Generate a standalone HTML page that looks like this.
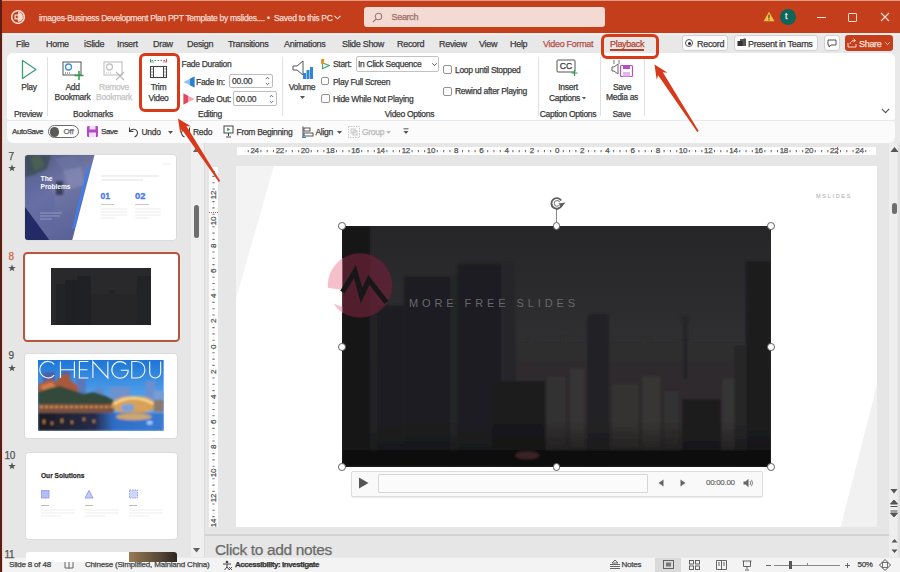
<!DOCTYPE html>
<html><head><meta charset="utf-8">
<style>
*{margin:0;padding:0;box-sizing:border-box}
html,body{width:900px;height:572px;overflow:hidden;background:#e9e9e9}
body{font-family:"Liberation Sans",sans-serif;position:relative}
.a{position:absolute}
.t{position:absolute;white-space:nowrap;line-height:1;-webkit-text-stroke:0.25px currentColor}
</style></head><body>
<div id="root" class="a" style="left:0;top:0;width:900px;height:572px;overflow:hidden;background:#e9e9e9">

<!-- title bar -->
<div class="a" style="left:0;top:0;width:900px;height:33px;background:#c43e1c"></div>
<div class="a" style="left:0;top:0;width:900px;height:1px;background:#e39b86"></div>

<!-- tab row -->
<div class="a" style="left:0;top:33px;width:900px;height:20px;background:#e8e8e9"></div><div class="a" style="left:0;top:33px;width:900px;height:1.5px;background:#f3eeec"></div>

<!-- ribbon panel -->
<div class="a" style="left:7px;top:53px;width:888px;height:66.5px;background:#fff;border-radius:6px 6px 2px 2px"></div>
<!-- QAT -->
<div class="a" style="left:7px;top:120.5px;width:888px;height:22.5px;background:#fbfbfb;border-radius:2px 2px 6px 6px"></div>

<!-- left pane -->
<div class="a" style="left:2px;top:143px;width:202px;height:414px;background:#e6e6e6"></div>
<!-- edit area -->
<div class="a" style="left:204px;top:143px;width:685px;height:414px;background:#e6e6e6;border-left:1px solid #d4d4d4"></div>
<!-- notes separator -->
<div class="a" style="left:205px;top:534px;width:684px;height:2px;background:#d2d2d2"></div>
<!-- right scrollbar -->
<div class="a" style="left:889px;top:143px;width:8px;height:414px;background:#eeeeee"></div>
<div class="a" style="left:898px;top:143px;width:2px;height:414px;background:#e0e0e0"></div>
<!-- status bar -->
<div class="a" style="left:0;top:557.5px;width:900px;height:14.5px;background:#f3f3f3"></div>




<!-- ===== RULERS ===== -->
<div class="a" style="left:237px;top:146.8px;width:639px;height:8.4px;background:#fff"></div>
<div class="a" style="left:208.7px;top:167px;width:9.5px;height:360px;background:#fff"></div>
<div class="t" style="left:254.6px;top:147.3px;font-size:8px;letter-spacing:-0.3px;color:#505050;transform:translateX(-50%)">24</div>
<div class="t" style="left:279.8px;top:147.3px;font-size:8px;letter-spacing:-0.3px;color:#505050;transform:translateX(-50%)">22</div>
<div class="t" style="left:305.0px;top:147.3px;font-size:8px;letter-spacing:-0.3px;color:#505050;transform:translateX(-50%)">20</div>
<div class="t" style="left:330.2px;top:147.3px;font-size:8px;letter-spacing:-0.3px;color:#505050;transform:translateX(-50%)">18</div>
<div class="t" style="left:355.4px;top:147.3px;font-size:8px;letter-spacing:-0.3px;color:#505050;transform:translateX(-50%)">16</div>
<div class="t" style="left:380.6px;top:147.3px;font-size:8px;letter-spacing:-0.3px;color:#505050;transform:translateX(-50%)">14</div>
<div class="t" style="left:405.8px;top:147.3px;font-size:8px;letter-spacing:-0.3px;color:#505050;transform:translateX(-50%)">12</div>
<div class="t" style="left:431.0px;top:147.3px;font-size:8px;letter-spacing:-0.3px;color:#505050;transform:translateX(-50%)">10</div>
<div class="t" style="left:456.2px;top:147.3px;font-size:8px;letter-spacing:-0.3px;color:#505050;transform:translateX(-50%)">8</div>
<div class="t" style="left:481.4px;top:147.3px;font-size:8px;letter-spacing:-0.3px;color:#505050;transform:translateX(-50%)">6</div>
<div class="t" style="left:506.6px;top:147.3px;font-size:8px;letter-spacing:-0.3px;color:#505050;transform:translateX(-50%)">4</div>
<div class="t" style="left:531.8px;top:147.3px;font-size:8px;letter-spacing:-0.3px;color:#505050;transform:translateX(-50%)">2</div>
<div class="t" style="left:557.0px;top:147.3px;font-size:8px;letter-spacing:-0.3px;color:#505050;transform:translateX(-50%)">0</div>
<div class="t" style="left:582.2px;top:147.3px;font-size:8px;letter-spacing:-0.3px;color:#505050;transform:translateX(-50%)">2</div>
<div class="t" style="left:607.4px;top:147.3px;font-size:8px;letter-spacing:-0.3px;color:#505050;transform:translateX(-50%)">4</div>
<div class="t" style="left:632.6px;top:147.3px;font-size:8px;letter-spacing:-0.3px;color:#505050;transform:translateX(-50%)">6</div>
<div class="t" style="left:657.8px;top:147.3px;font-size:8px;letter-spacing:-0.3px;color:#505050;transform:translateX(-50%)">8</div>
<div class="t" style="left:683.0px;top:147.3px;font-size:8px;letter-spacing:-0.3px;color:#505050;transform:translateX(-50%)">10</div>
<div class="t" style="left:708.2px;top:147.3px;font-size:8px;letter-spacing:-0.3px;color:#505050;transform:translateX(-50%)">12</div>
<div class="t" style="left:733.4px;top:147.3px;font-size:8px;letter-spacing:-0.3px;color:#505050;transform:translateX(-50%)">14</div>
<div class="t" style="left:758.6px;top:147.3px;font-size:8px;letter-spacing:-0.3px;color:#505050;transform:translateX(-50%)">16</div>
<div class="t" style="left:783.8px;top:147.3px;font-size:8px;letter-spacing:-0.3px;color:#505050;transform:translateX(-50%)">18</div>
<div class="t" style="left:809.0px;top:147.3px;font-size:8px;letter-spacing:-0.3px;color:#505050;transform:translateX(-50%)">20</div>
<div class="t" style="left:834.2px;top:147.3px;font-size:8px;letter-spacing:-0.3px;color:#505050;transform:translateX(-50%)">22</div>
<div class="t" style="left:859.4px;top:147.3px;font-size:8px;letter-spacing:-0.3px;color:#505050;transform:translateX(-50%)">24</div>
<svg class="a" style="left:0;top:0" width="900" height="572"><path d="M248.3 150 v2.2 M260.9 150 v2.2 M267.2 150 v2.2 M273.5 150 v2.2 M286.1 150 v2.2 M292.4 150 v2.2 M298.7 150 v2.2 M311.3 150 v2.2 M317.6 150 v2.2 M323.9 150 v2.2 M336.5 150 v2.2 M342.8 150 v2.2 M349.1 150 v2.2 M361.7 150 v2.2 M368.0 150 v2.2 M374.3 150 v2.2 M386.9 150 v2.2 M393.2 150 v2.2 M399.5 150 v2.2 M412.1 150 v2.2 M418.4 150 v2.2 M424.7 150 v2.2 M437.3 150 v2.2 M443.6 150 v2.2 M449.9 150 v2.2 M462.5 150 v2.2 M468.8 150 v2.2 M475.1 150 v2.2 M487.7 150 v2.2 M494.0 150 v2.2 M500.3 150 v2.2 M512.9 150 v2.2 M519.2 150 v2.2 M525.5 150 v2.2 M538.1 150 v2.2 M544.4 150 v2.2 M550.7 150 v2.2 M563.3 150 v2.2 M569.6 150 v2.2 M575.9 150 v2.2 M588.5 150 v2.2 M594.8 150 v2.2 M601.1 150 v2.2 M613.7 150 v2.2 M620.0 150 v2.2 M626.3 150 v2.2 M638.9 150 v2.2 M645.2 150 v2.2 M651.5 150 v2.2 M664.1 150 v2.2 M670.4 150 v2.2 M676.7 150 v2.2 M689.3 150 v2.2 M695.6 150 v2.2 M701.9 150 v2.2 M714.5 150 v2.2 M720.8 150 v2.2 M727.1 150 v2.2 M739.7 150 v2.2 M746.0 150 v2.2 M752.3 150 v2.2 M764.9 150 v2.2 M771.2 150 v2.2 M777.5 150 v2.2 M790.1 150 v2.2 M796.4 150 v2.2 M802.7 150 v2.2 M815.3 150 v2.2 M821.6 150 v2.2 M827.9 150 v2.2 M840.5 150 v2.2 M846.8 150 v2.2 M853.1 150 v2.2 M865.7 150 v2.2" stroke="#707070" stroke-width="1.1"/><path d="M245.2 150.6 v1 M251.4 150.6 v1 M257.8 150.6 v1 M264.1 150.6 v1 M270.4 150.6 v1 M276.7 150.6 v1 M282.9 150.6 v1 M289.2 150.6 v1 M295.6 150.6 v1 M301.9 150.6 v1 M308.1 150.6 v1 M314.5 150.6 v1 M320.8 150.6 v1 M327.1 150.6 v1 M333.4 150.6 v1 M339.6 150.6 v1 M346.0 150.6 v1 M352.2 150.6 v1 M358.6 150.6 v1 M364.9 150.6 v1 M371.1 150.6 v1 M377.5 150.6 v1 M383.8 150.6 v1 M390.1 150.6 v1 M396.4 150.6 v1 M402.6 150.6 v1 M409.0 150.6 v1 M415.2 150.6 v1 M421.6 150.6 v1 M427.9 150.6 v1 M434.1 150.6 v1 M440.4 150.6 v1 M446.8 150.6 v1 M453.1 150.6 v1 M459.4 150.6 v1 M465.6 150.6 v1 M471.9 150.6 v1 M478.2 150.6 v1 M484.6 150.6 v1 M490.9 150.6 v1 M497.1 150.6 v1 M503.4 150.6 v1 M509.8 150.6 v1 M516.0 150.6 v1 M522.4 150.6 v1 M528.6 150.6 v1 M535.0 150.6 v1 M541.2 150.6 v1 M547.5 150.6 v1 M553.9 150.6 v1 M560.1 150.6 v1 M566.5 150.6 v1 M572.8 150.6 v1 M579.0 150.6 v1 M585.4 150.6 v1 M591.6 150.6 v1 M598.0 150.6 v1 M604.2 150.6 v1 M610.5 150.6 v1 M616.9 150.6 v1 M623.1 150.6 v1 M629.5 150.6 v1 M635.8 150.6 v1 M642.0 150.6 v1 M648.4 150.6 v1 M654.6 150.6 v1 M661.0 150.6 v1 M667.2 150.6 v1 M673.5 150.6 v1 M679.9 150.6 v1 M686.1 150.6 v1 M692.5 150.6 v1 M698.8 150.6 v1 M705.0 150.6 v1 M711.4 150.6 v1 M717.6 150.6 v1 M724.0 150.6 v1 M730.2 150.6 v1 M736.5 150.6 v1 M742.9 150.6 v1 M749.1 150.6 v1 M755.5 150.6 v1 M761.8 150.6 v1 M768.0 150.6 v1 M774.4 150.6 v1 M780.6 150.6 v1 M787.0 150.6 v1 M793.2 150.6 v1 M799.5 150.6 v1 M805.9 150.6 v1 M812.1 150.6 v1 M818.5 150.6 v1 M824.8 150.6 v1 M831.0 150.6 v1 M837.3 150.6 v1 M843.6 150.6 v1 M850.0 150.6 v1 M856.2 150.6 v1 M862.5 150.6 v1 M868.8 150.6 v1" stroke="#cfcfcf" stroke-width="0.8"/></svg>
<div class="a" style="left:212.4px;top:170.5px;width:2.2px;height:1.1px;background:#707070"></div>
<div class="t" style="left:213.5px;top:195.3px;font-size:8px;letter-spacing:-0.3px;color:#505050;transform:translate(-50%,-50%) rotate(-90deg)">12</div>
<div class="t" style="left:213.5px;top:220.5px;font-size:8px;letter-spacing:-0.3px;color:#505050;transform:translate(-50%,-50%) rotate(-90deg)">10</div>
<div class="t" style="left:213.5px;top:245.7px;font-size:8px;letter-spacing:-0.3px;color:#505050;transform:translate(-50%,-50%) rotate(-90deg)">8</div>
<div class="t" style="left:213.5px;top:270.9px;font-size:8px;letter-spacing:-0.3px;color:#505050;transform:translate(-50%,-50%) rotate(-90deg)">6</div>
<div class="t" style="left:213.5px;top:296.1px;font-size:8px;letter-spacing:-0.3px;color:#505050;transform:translate(-50%,-50%) rotate(-90deg)">4</div>
<div class="t" style="left:213.5px;top:321.3px;font-size:8px;letter-spacing:-0.3px;color:#505050;transform:translate(-50%,-50%) rotate(-90deg)">2</div>
<div class="t" style="left:213.5px;top:346.5px;font-size:8px;letter-spacing:-0.3px;color:#505050;transform:translate(-50%,-50%) rotate(-90deg)">0</div>
<div class="t" style="left:213.5px;top:371.7px;font-size:8px;letter-spacing:-0.3px;color:#505050;transform:translate(-50%,-50%) rotate(-90deg)">2</div>
<div class="t" style="left:213.5px;top:396.9px;font-size:8px;letter-spacing:-0.3px;color:#505050;transform:translate(-50%,-50%) rotate(-90deg)">4</div>
<div class="t" style="left:213.5px;top:422.1px;font-size:8px;letter-spacing:-0.3px;color:#505050;transform:translate(-50%,-50%) rotate(-90deg)">6</div>
<div class="t" style="left:213.5px;top:447.3px;font-size:8px;letter-spacing:-0.3px;color:#505050;transform:translate(-50%,-50%) rotate(-90deg)">8</div>
<div class="t" style="left:213.5px;top:472.5px;font-size:8px;letter-spacing:-0.3px;color:#505050;transform:translate(-50%,-50%) rotate(-90deg)">10</div>
<div class="t" style="left:213.5px;top:497.7px;font-size:8px;letter-spacing:-0.3px;color:#505050;transform:translate(-50%,-50%) rotate(-90deg)">12</div>
<div class="t" style="left:213.5px;top:522.9px;font-size:8px;letter-spacing:-0.3px;color:#505050;transform:translate(-50%,-50%) rotate(-90deg)">14</div>
<svg class="a" style="left:0;top:0" width="900" height="572"><path d="M212.4 176.4 h2.2 M212.4 182.7 h2.2 M212.4 189.0 h2.2 M212.4 201.6 h2.2 M212.4 207.9 h2.2 M212.4 214.2 h2.2 M212.4 226.8 h2.2 M212.4 233.1 h2.2 M212.4 239.4 h2.2 M212.4 252.0 h2.2 M212.4 258.3 h2.2 M212.4 264.6 h2.2 M212.4 277.2 h2.2 M212.4 283.5 h2.2 M212.4 289.8 h2.2 M212.4 302.4 h2.2 M212.4 308.7 h2.2 M212.4 315.0 h2.2 M212.4 327.6 h2.2 M212.4 333.9 h2.2 M212.4 340.2 h2.2 M212.4 352.8 h2.2 M212.4 359.1 h2.2 M212.4 365.4 h2.2 M212.4 378.0 h2.2 M212.4 384.3 h2.2 M212.4 390.6 h2.2 M212.4 403.2 h2.2 M212.4 409.5 h2.2 M212.4 415.8 h2.2 M212.4 428.4 h2.2 M212.4 434.7 h2.2 M212.4 441.0 h2.2 M212.4 453.6 h2.2 M212.4 459.9 h2.2 M212.4 466.2 h2.2 M212.4 478.8 h2.2 M212.4 485.1 h2.2 M212.4 491.4 h2.2 M212.4 504.0 h2.2 M212.4 510.3 h2.2 M212.4 516.6 h2.2" stroke="#707070" stroke-width="1.1"/><path d="M213 173.2 h1 M213 179.6 h1 M213 185.8 h1 M213 192.2 h1 M213 198.5 h1 M213 204.8 h1 M213 211.1 h1 M213 217.3 h1 M213 223.7 h1 M213 229.9 h1 M213 236.2 h1 M213 242.6 h1 M213 248.9 h1 M213 255.2 h1 M213 261.4 h1 M213 267.8 h1 M213 274.1 h1 M213 280.4 h1 M213 286.6 h1 M213 292.9 h1 M213 299.2 h1 M213 305.6 h1 M213 311.9 h1 M213 318.1 h1 M213 324.4 h1 M213 330.8 h1 M213 337.1 h1 M213 343.4 h1 M213 349.6 h1 M213 355.9 h1 M213 362.2 h1 M213 368.6 h1 M213 374.9 h1 M213 381.1 h1 M213 387.4 h1 M213 393.8 h1 M213 400.1 h1 M213 406.4 h1 M213 412.6 h1 M213 418.9 h1 M213 425.2 h1 M213 431.6 h1 M213 437.9 h1 M213 444.1 h1 M213 450.4 h1 M213 456.8 h1 M213 463.1 h1 M213 469.4 h1 M213 475.6 h1 M213 481.9 h1 M213 488.2 h1 M213 494.5 h1 M213 500.9 h1 M213 507.1 h1 M213 513.5 h1 M213 519.8 h1" stroke="#cfcfcf" stroke-width="0.8"/></svg>
<div class="a" style="left:836.5px;top:147px;width:1px;height:8px;background:repeating-linear-gradient(#e05050 0 1px,transparent 1px 2px)"></div>
<div class="a" style="left:209px;top:212px;width:9px;height:1px;background:repeating-linear-gradient(90deg,#e05050 0 1px,transparent 1px 2px)"></div>
<!-- ===== SLIDE ===== -->
<div class="a" style="left:236px;top:166px;width:641px;height:361px;background:#fff;overflow:hidden">
 <svg class="a" style="left:0;top:0" width="641" height="361" viewBox="0 0 641 361">
  <polygon points="0,0 38,0 0,132.6" fill="#f3f3f3"/>
  <polygon points="604.6,361 641,219 641,361" fill="#f1f1f1"/>
 </svg>
 <div class="t" style="left:580px;top:28px;font-size:5.5px;letter-spacing:1.7px;color:#a8a8a8;-webkit-text-stroke:0">MSLIDES</div>
</div>

<!-- video -->
<div class="a" style="left:342.2px;top:226.3px;width:428.5px;height:240.5px;background:#2b2b2d;overflow:hidden">
 <svg class="a" style="left:0;top:0" width="428.5" height="240.5" viewBox="0 0 428 240">
  <defs>
   <linearGradient id="vsky" x1="0" y1="0" x2="0" y2="1"><stop offset="0" stop-color="#262628"/><stop offset="0.47" stop-color="#2f2f31"/><stop offset="1" stop-color="#262526"/></linearGradient>
   <linearGradient id="vbot" x1="0" y1="0" x2="0" y2="1"><stop offset="0" stop-color="#141414" stop-opacity="0"/><stop offset="1" stop-color="#141414" stop-opacity="0.85"/></linearGradient>
   <filter id="vbl" x="-2%" y="-2%" width="104%" height="104%"><feGaussianBlur stdDeviation="1"/></filter>
  </defs>
  <rect x="0" y="0" width="428" height="240" fill="url(#vsky)"/>
  <g filter="url(#vbl)">
  <path d="M174 118 h12 v-5 h8 v5 h26 v-7 h6 v7 h30 v-4 h10 v4 h34 v-6 h8 v6 h30 v-3 h12 v3 h78 v122 H174 Z" fill="#2d2d2f"/>
  <rect x="174" y="135" width="254" height="105" fill="#2e2c2d"/>
  <rect x="205" y="150" width="18" height="80" fill="#333132"/>
  <rect x="228" y="142" width="14" height="88" fill="#363434"/>
  <rect x="270" y="158" width="26" height="72" fill="#353333"/>
  <rect x="300" y="150" width="18" height="80" fill="#373535"/>
  <rect x="322" y="165" width="14" height="60" fill="#333131"/>
  <rect x="380" y="152" width="20" height="78" fill="#363434"/>
  <rect x="0" y="0" width="28" height="240" fill="#141518"/>
  <rect x="28" y="60" width="7" height="180" fill="#222326"/>
  <rect x="35" y="79" width="27" height="161" fill="#1d1e21"/>
  <rect x="62" y="50" width="53" height="190" fill="#1c1d20"/>
  <rect x="108" y="50" width="7" height="190" fill="#242528"/>
  <rect x="115" y="37" width="44" height="203" fill="#1e1f22"/>
  <rect x="159" y="37" width="15" height="203" fill="#262629"/>
  <rect x="150" y="155" width="53" height="85" fill="#1a1a1c"/>
  <rect x="245" y="88" width="22" height="152" fill="#232325"/>
  <rect x="341.5" y="93" width="3" height="60" fill="#242426"/>
  <path d="M337 90 h11 l-3 5 h-5 Z" fill="#262628"/>
  <rect x="340" y="173" width="38" height="67" fill="#1d1d1f"/>
  <rect x="404" y="35" width="24" height="205" fill="#1b1c1e"/>
  <rect x="392" y="120" width="12" height="120" fill="#262628"/>
  <rect x="0" y="195" width="428" height="45" fill="url(#vbot)"/>
  <rect x="0" y="224" width="428" height="16" fill="#0b0b0c"/>
  <ellipse cx="185" cy="229" rx="12" ry="4" fill="#3a2226"/>
  </g>
 </svg>
</div>
<!-- watermark -->
<svg class="a" style="left:315px;top:245px" width="90" height="80" viewBox="0 0 90 80">
  <defs>
   <mask id="wm"><rect x="0" y="0" width="90" height="80" fill="#fff"/><polygon points="0,41 27.5,45 27.5,62 18,58.5 0,57" fill="#000"/></mask>
   <clipPath id="cwL"><rect x="0" y="0" width="27.5" height="80"/></clipPath>
   <clipPath id="cwR"><rect x="27.5" y="0" width="63" height="80"/></clipPath>
  </defs>
  <g mask="url(#wm)">
   <circle cx="45" cy="40.5" r="32.3" fill="#f5bfcc" clip-path="url(#cwL)"/>
  </g>
  <circle cx="45" cy="40.5" r="32.3" fill="#6a2036" opacity="0.72" clip-path="url(#cwR)"/>
  <path d="M27.5 47 L40 26.5 L46.5 50.5 L53.8 35 L71.5 57.5" fill="none" stroke="#17171a" stroke-width="5.2" stroke-linejoin="miter" stroke-miterlimit="3"/>
</svg>
<div class="t" style="left:409px;top:297.5px;font-size:11px;letter-spacing:3.9px;color:#68686c;-webkit-text-stroke:0">MORE FREE SLIDES</div>
<!-- selection frame -->
<div class="a" style="left:556.3px;top:209px;width:1px;height:17px;background:#8a8a8a"></div>
<svg class="a" style="left:548.8px;top:195.6px" width="18" height="16" viewBox="0 0 18 16"><path d="M12.6 9.5 A5.3 5.3 0 1 1 12.2 4.6" fill="none" stroke="#5e5e5e" stroke-width="1.9"/><path d="M10.3 9 A2.8 2.8 0 1 1 10.6 6.2" fill="none" stroke="#8a8a8a" stroke-width="1.1"/><path d="M9.6 7.6 L16.4 6.6 L12.4 11.6 Z" fill="#5e5e5e"/></svg>

<div class="a" style="left:338.3px;top:222.4px;width:7.8px;height:7.8px;border-radius:50%;background:#fff;border:1.3px solid #5e5e5e"></div>
<div class="a" style="left:552.6px;top:222.4px;width:7.8px;height:7.8px;border-radius:50%;background:#fff;border:1.3px solid #5e5e5e"></div>
<div class="a" style="left:766.8px;top:222.4px;width:7.8px;height:7.8px;border-radius:50%;background:#fff;border:1.3px solid #5e5e5e"></div>
<div class="a" style="left:338.3px;top:342.9px;width:7.8px;height:7.8px;border-radius:50%;background:#fff;border:1.3px solid #5e5e5e"></div>
<div class="a" style="left:766.8px;top:342.9px;width:7.8px;height:7.8px;border-radius:50%;background:#fff;border:1.3px solid #5e5e5e"></div>
<div class="a" style="left:338.3px;top:463.3px;width:7.8px;height:7.8px;border-radius:50%;background:#fff;border:1.3px solid #5e5e5e"></div>
<div class="a" style="left:552.6px;top:463.3px;width:7.8px;height:7.8px;border-radius:50%;background:#fff;border:1.3px solid #5e5e5e"></div>
<div class="a" style="left:766.8px;top:463.3px;width:7.8px;height:7.8px;border-radius:50%;background:#fff;border:1.3px solid #5e5e5e"></div>
<!-- video controls -->
<div class="a" style="left:350.5px;top:470.5px;width:412px;height:26px;background:#f9f9f9;border:1px solid #dcdcdc;border-radius:2px;box-shadow:0 1px 1px rgba(0,0,0,0.08)"></div>
<svg class="a" style="left:358px;top:477px" width="11" height="12" viewBox="0 0 11 12"><path d="M1 0.5 L10.5 6 L1 11.5 Z" fill="#555"/></svg>
<div class="a" style="left:378px;top:473.5px;width:270px;height:19px;background:#fbfbfb;border:1px solid #d6d6d6;border-radius:1px"></div>
<svg class="a" style="left:657px;top:478.5px" width="8" height="8" viewBox="0 0 8 8"><path d="M6.5 0.5 V7.5 L1.5 4 Z" fill="#666"/></svg>
<svg class="a" style="left:679px;top:478.5px" width="8" height="8" viewBox="0 0 8 8"><path d="M1.5 0.5 V7.5 L6.5 4 Z" fill="#666"/></svg>
<div class="t" style="left:706px;top:478.5px;font-size:8px;letter-spacing:-0.3px;color:#555;-webkit-text-stroke:0.1px currentColor">00:00.00</div>
<svg class="a" style="left:743px;top:477.5px" width="11" height="10" viewBox="0 0 11 10"><path d="M0.5 3.5 H2.5 L5.5 0.8 V9.2 L2.5 6.5 H0.5 Z" fill="#666"/><path d="M7 3 Q8.3 5 7 7 M8.5 1.8 Q10.5 5 8.5 8.2" fill="none" stroke="#666" stroke-width="0.8"/></svg>


<!-- ===== NOTES + STATUS ===== -->
<div id="notes" class="t" style="left:215px;top:541.5px;font-size:15.5px;letter-spacing:-0.35px;color:#6a6a6a">Click to add notes</div>
<svg class="a" style="left:890px;top:537px" width="9" height="18" viewBox="0 0 9 18"><path d="M1.5 5.5 L4.5 2 L7.5 5.5 Z M1.5 12.5 L4.5 16 L7.5 12.5 Z" fill="#555"/></svg>
<svg class="a" style="left:889px;top:487px" width="10" height="32" viewBox="0 0 10 32"><path d="M1.5 2 L5 6.5 L8.5 2 Z" fill="#555"/><path d="M1.5 17 L5 13 L8.5 17 Z M1.5 19.5 h7" fill="#555" stroke="#555" stroke-width="1"/><path d="M1.5 24 h7 M1.5 26 L5 30 L8.5 26 Z" fill="#555" stroke="#555" stroke-width="1"/></svg>
<svg class="a" style="left:890px;top:146px" width="9" height="7" viewBox="0 0 9 7"><path d="M0.5 6 L4.5 1 L8.5 6 Z" fill="#555"/></svg>
<div class="a" style="left:892px;top:203px;width:5px;height:10.5px;background:#6e6e6e;border-radius:3px"></div>

<div id="sSlide" class="t" style="left:9px;top:560.5px;font-size:8px;letter-spacing:-0.2px;color:#444">Slide 8 of 48</div>
<svg class="a" style="left:64px;top:560px" width="10" height="9" viewBox="0 0 10 9"><path d="M1 1 H4 Q5 1 5 2 Q5 1 6 1 H9 V8 H6 Q5 8 5 8.5 Q5 8 4 8 H1 Z M5 2 V8" fill="none" stroke="#555" stroke-width="0.9"/></svg>
<div id="sLang" class="t" style="left:85px;top:560.5px;font-size:8px;letter-spacing:-0.2px;color:#444">Chinese (Simplified, Mainland China)</div>
<svg class="a" style="left:222px;top:559.5px" width="11" height="11" viewBox="0 0 11 11"><circle cx="5" cy="2" r="1.3" fill="#444"/><path d="M1 4 H9 M5 4 V7 L2.5 10 M5 7 L7.5 10" fill="none" stroke="#444" stroke-width="1"/><path d="M7 7 L10 10 M10 7 L7 10" stroke="#444" stroke-width="0.9"/></svg>
<div id="sAcc" class="t" style="left:235px;top:560.5px;font-size:8px;font-weight:bold;letter-spacing:-0.45px;color:#333">Accessibility: Investigate</div>

<svg class="a" style="left:608.5px;top:559px" width="12" height="11" viewBox="0 0 12 11"><path d="M6 1 L9 4 H3 Z" fill="none" stroke="#555" stroke-width="0.9"/><path d="M1 5.5 h10 M1 7.5 h10 M1 9.5 h10" stroke="#555" stroke-width="0.9"/></svg>
<div id="sNotes" class="t" style="left:621.5px;top:560.5px;font-size:8px;letter-spacing:-0.2px;color:#444">Notes</div>
<div class="a" style="left:654.5px;top:558px;width:26.5px;height:14px;background:#dadada"></div>
<svg class="a" style="left:662.5px;top:560px" width="11" height="9" viewBox="0 0 11 9"><rect x="0.5" y="0.5" width="10" height="8" fill="none" stroke="#555" stroke-width="0.9"/><rect x="3" y="2.5" width="5" height="4" fill="#777"/></svg>
<svg class="a" style="left:688.5px;top:560px" width="11" height="10" viewBox="0 0 11 10"><rect x="0.5" y="0.5" width="4" height="3.5" fill="none" stroke="#555" stroke-width="0.9"/><rect x="6.5" y="0.5" width="4" height="3.5" fill="none" stroke="#555" stroke-width="0.9"/><rect x="0.5" y="6" width="4" height="3.5" fill="none" stroke="#555" stroke-width="0.9"/><rect x="6.5" y="6" width="4" height="3.5" fill="none" stroke="#555" stroke-width="0.9"/></svg>
<svg class="a" style="left:715.5px;top:560px" width="11" height="10" viewBox="0 0 11 10"><path d="M0.5 0.5 H10.5 V9.5 H0.5 Z M5.5 0.5 V9.5 M2 3 h2 M2 5 h2 M7 3 h2 M7 5 h2" fill="none" stroke="#555" stroke-width="0.9"/></svg>
<svg class="a" style="left:742px;top:559.5px" width="10" height="11" viewBox="0 0 10 11"><path d="M0.5 1 H9.5 M1.5 1 V6.5 H8.5 V1 M5 6.5 V9 M3 10 h4" fill="none" stroke="#555" stroke-width="0.9"/></svg>
<div class="a" style="left:765.5px;top:564.5px;width:5px;height:1px;background:#666"></div>
<div class="a" style="left:773.5px;top:564.5px;width:66.5px;height:1px;background:#888"></div>
<div class="a" style="left:807px;top:563px;width:1px;height:3px;background:#888"></div>
<div class="a" style="left:789px;top:561px;width:3px;height:8px;background:#555"></div>
<div class="a" style="left:844.5px;top:564.5px;width:5px;height:1px;background:#666"></div>
<div class="a" style="left:846.5px;top:562.5px;width:1px;height:5px;background:#666"></div>
<div id="sZoom" class="t" style="left:857.5px;top:560.5px;font-size:8px;letter-spacing:-0.3px;color:#444">50%</div>
<svg class="a" style="left:879px;top:559px" width="12" height="12" viewBox="0 0 12 12"><path d="M6 0.5 L11.5 6 L6 11.5 L0.5 6 Z" fill="none" stroke="#555" stroke-width="1"/><rect x="3.5" y="3.5" width="5" height="5" fill="none" stroke="#555" stroke-width="0.8"/></svg>

<!-- ===== LEFT PANE ===== -->
<div class="a" style="left:190.5px;top:143px;width:13px;height:414px;background:#efefef"></div>
<div class="a" style="left:203.5px;top:143px;width:1px;height:414px;background:#dadada"></div>
<svg class="a" style="left:192.5px;top:147.5px" width="5" height="4" viewBox="0 0 5 4"><path d="M0 4 L2.5 0.5 L5 4 Z" fill="#606060"/></svg>
<svg class="a" style="left:192.5px;top:548px" width="7" height="5" viewBox="0 0 7 5"><path d="M0 0 L3.5 4.5 L7 0 Z" fill="#606060"/></svg>
<div class="a" style="left:193.5px;top:205px;width:5.5px;height:33px;background:#6e6e6e;border-radius:3px"></div>

<!-- slide numbers -->
<div class="t" style="left:8.5px;top:151.5px;font-size:10px;color:#555">7</div>
<div class="t" style="left:8.5px;top:251.5px;font-size:10px;color:#d0643f">8</div>
<div class="t" style="left:8.5px;top:351px;font-size:10px;color:#555">9</div>
<div class="t" style="left:4.6px;top:450.8px;font-size:10px;letter-spacing:-0.3px;color:#555">10</div>
<div class="t" style="left:4.6px;top:549.5px;font-size:10px;letter-spacing:-0.3px;color:#555">11</div>
<svg class="a" style="left:8px;top:164px" width="8" height="8" viewBox="0 0 10 10"><path d="M5 0.3 L6.2 3.6 L9.7 3.7 L6.9 5.8 L7.9 9.2 L5 7.2 L2.1 9.2 L3.1 5.8 L0.3 3.7 L3.8 3.6 Z" fill="#555"/></svg>
<svg class="a" style="left:8px;top:264px" width="8" height="8" viewBox="0 0 10 10"><path d="M5 0.3 L6.2 3.6 L9.7 3.7 L6.9 5.8 L7.9 9.2 L5 7.2 L2.1 9.2 L3.1 5.8 L0.3 3.7 L3.8 3.6 Z" fill="#555"/></svg>
<svg class="a" style="left:8px;top:363.5px" width="8" height="8" viewBox="0 0 10 10"><path d="M5 0.3 L6.2 3.6 L9.7 3.7 L6.9 5.8 L7.9 9.2 L5 7.2 L2.1 9.2 L3.1 5.8 L0.3 3.7 L3.8 3.6 Z" fill="#555"/></svg>
<svg class="a" style="left:8px;top:462px" width="8" height="8" viewBox="0 0 10 10"><path d="M5 0.3 L6.2 3.6 L9.7 3.7 L6.9 5.8 L7.9 9.2 L5 7.2 L2.1 9.2 L3.1 5.8 L0.3 3.7 L3.8 3.6 Z" fill="#555"/></svg>

<!-- thumb 7 -->
<div class="a" style="left:25.3px;top:154.5px;width:151.2px;height:85.3px;background:#fff;border-radius:3px;overflow:hidden;box-shadow:0 0 0 0.8px #d9d9d9">
 <svg class="a" style="left:0;top:0" width="152" height="86" viewBox="0 0 152 86">
  <defs>
   <linearGradient id="g7" x1="0" y1="0" x2="0.5" y2="1"><stop offset="0" stop-color="#4d5584"/><stop offset="0.5" stop-color="#7178a6"/><stop offset="1" stop-color="#5a6298"/></linearGradient>
   <filter id="b7"><feGaussianBlur stdDeviation="0.9"/></filter>
  </defs>
  <polygon points="0,0 69.5,0 47,86 0,86" fill="url(#g7)"/>
  <g filter="url(#b7)">
   <polygon points="0,0 26,0 22,14 8,20 0,22" fill="#3c4a52" opacity="0.8"/>
   <polygon points="5,2 14,0 20,10 10,16" fill="#4f6a50" opacity="0.7"/>
   <polygon points="30,4 50,0 56,10 40,18" fill="#6a74a0" opacity="0.8"/>
   <polygon points="38,16 56,12 60,30 44,34" fill="#8a90b8" opacity="0.6"/>
   <rect x="31" y="26" width="7" height="14" fill="#2a3048" opacity="0.8"/>
   <polygon points="0,30 14,24 30,40 30,70 0,80" fill="#5d66a0" opacity="0.5"/>
  </g>
  <polygon points="0,52 25,86 0,86" fill="#232a66"/>
  <polygon points="62.5,11.5 65,11.5 49.5,73.5 47,73.5" fill="#3b7ff0"/>
  <text x="15.5" y="25.5" font-family="Liberation Sans" font-weight="bold" font-size="6.8" fill="#fff">The</text>
  <text x="15.5" y="33.5" font-family="Liberation Sans" font-weight="bold" font-size="6.8" textLength="30" lengthAdjust="spacingAndGlyphs" fill="#fff">Problems</text>
  <path d="M15 58 h22 M15 61 h20 M15 64 h12" stroke="#a6abd0" stroke-width="0.7"/>
  <path d="M76 21 h58 M76 25 h42" stroke="#cdcdcd" stroke-width="0.6"/>
  <text x="75.5" y="43.5" font-family="Liberation Sans" font-weight="bold" font-size="8.5" textLength="9.5" lengthAdjust="spacingAndGlyphs" fill="#4a78e8" stroke="#4a78e8" stroke-width="0.3">01</text>
  <text x="110" y="43.5" font-family="Liberation Sans" font-weight="bold" font-size="8.5" textLength="10.5" lengthAdjust="spacingAndGlyphs" fill="#4a78e8" stroke="#4a78e8" stroke-width="0.3">02</text>
  <path d="M76 49.5 h13 M110 49.5 h14" stroke="#b0b0b0" stroke-width="0.7"/>
  <path d="M76 54 h26 M76 57 h26 M76 60 h26 M76 63 h14 M110 54 h26 M110 57 h26 M110 60 h26 M110 63 h14" stroke="#e2e2e2" stroke-width="0.7"/>
  <path d="M138 9 h8" stroke="#e4e4e4" stroke-width="0.7"/>
 </svg>
</div>

<!-- thumb 8 selected -->
<div class="a" style="left:22.5px;top:251.5px;width:157px;height:90.5px;border:2.3px solid #b9553c;border-radius:4.5px;background:#fff"></div>
<div class="a" style="left:51px;top:268px;width:100px;height:56.5px;background:#262628;overflow:hidden">
 <svg class="a" style="left:0;top:0" width="100" height="57" viewBox="0 0 100 57">
  <rect x="0" y="0" width="100" height="57" fill="#29292b"/>
  <rect x="14" y="12" width="12" height="45" fill="#1f2023"/>
  <rect x="26" y="8" width="14" height="49" fill="#202125"/>
  <rect x="5" y="16" width="9" height="41" fill="#222326"/>
  <rect x="58" y="22" width="6" height="35" fill="#222326"/>
  <rect x="40" y="26" width="60" height="31" fill="#262527"/>
  <rect x="86" y="8" width="14" height="49" fill="#222326"/>
 </svg>
</div>

<!-- thumb 9 -->
<div class="a" style="left:25px;top:353.5px;width:151.5px;height:84.5px;background:#fff;border-radius:3px;overflow:hidden;box-shadow:0 0 0 0.8px #d9d9d9">
 <svg class="a" style="left:13.2px;top:6.7px" width="125.7" height="70.8" viewBox="0 0 126 71">
  <defs>
   <linearGradient id="sky9" x1="0" y1="0" x2="0" y2="1"><stop offset="0" stop-color="#1d76d6"/><stop offset="0.5" stop-color="#52a0ea"/><stop offset="1" stop-color="#86b8ec"/></linearGradient>
   <linearGradient id="wat9" x1="0" y1="0" x2="1" y2="0"><stop offset="0" stop-color="#1c1a22"/><stop offset="0.45" stop-color="#262c48"/><stop offset="0.6" stop-color="#2f6cc4"/><stop offset="1" stop-color="#3a7ad4"/></linearGradient>
   <filter id="bl9" x="-5%" y="-5%" width="110%" height="110%"><feGaussianBlur stdDeviation="1.1"/></filter>
  </defs>
  <rect x="0" y="0" width="126" height="71" fill="url(#sky9)"/>
  <g filter="url(#bl9)">
   <rect x="5" y="12" width="12" height="24" fill="#4a62a8"/>
   <rect x="24" y="11" width="8" height="26" fill="#55609a"/>
   <rect x="38" y="18" width="10" height="20" fill="#5a78b8"/>
   <rect x="57" y="28" width="9" height="12" fill="#6088c8"/>
   <rect x="72" y="27" width="20" height="12" fill="#6e92cc"/>
   <rect x="108" y="21" width="10" height="18" fill="#6a90d0"/>
   <rect x="116" y="31" width="10" height="8" fill="#7a9cd4"/>
   <polygon points="0,24 6,22 12,19 18,22 22,16 30,14 34,22 40,26 40,38 0,40" fill="#a9583e"/>
   <polygon points="2,26 14,22 20,30 8,34" fill="#e08a48" opacity="0.8"/>
   <polygon points="0,32 12,28 22,26 34,30 46,34 56,32 68,36 76,40 76,50 0,52" fill="#30483a"/>
   <rect x="0" y="44" width="76" height="9" fill="#7a5040"/>
   <path d="M2 47 h72" stroke="#e8a050" stroke-width="1.6" stroke-dasharray="3 2"/>
   <ellipse cx="96" cy="45" rx="22" ry="9" fill="#d8a058"/>
   <path d="M76 44 Q96 32 116 44" stroke="#f8d890" stroke-width="2.5" fill="none"/>
   <ellipse cx="90" cy="48" rx="7" ry="4" fill="#7aa0d8"/>
   <rect x="116" y="40" width="10" height="12" fill="#8a7a70"/>
   <rect x="0" y="53" width="126" height="18" fill="url(#wat9)"/>
   <ellipse cx="96" cy="57" rx="18" ry="3.5" fill="#e8b060" opacity="0.85"/>
   <path d="M6 60 v4 M14 62 v3 M24 59 v4 M34 61 v3 M46 58 v3 M56 60 v3" stroke="#e09a48" stroke-width="1.6"/>
   <ellipse cx="112" cy="63" rx="3" ry="2" fill="#9fd0ff"/>
  </g>
  <path d="M16.3 4.3 A8.3 8.3 0 1 0 16.3 15.2 M22.5 1.5 V18 M36.5 1.5 V18 M22.5 9.8 H36.5 M50.5 1.5 H41.5 V18 H50.5 M41.5 9.8 H49.5 M55 18 V1.5 L70 18 V1.5 M88.5 4.3 A8.3 8.3 0 1 0 90.3 12.2 V10.3 H83 M94 1.5 V18 H99 A8.2 8.2 0 0 0 99 1.5 Z M112 1.5 V12.5 A5.5 5.5 0 0 0 123 12.5 V1.5" fill="none" stroke="#f2f7ff" stroke-width="1.15"/>
 </svg>
</div>

<!-- thumb 10 -->
<div class="a" style="left:25.5px;top:453px;width:151.5px;height:86px;background:#fff;border-radius:3px;overflow:hidden;box-shadow:0 0 0 0.8px #d9d9d9">
 <svg class="a" style="left:0;top:0" width="152" height="86" viewBox="0 0 152 86">
  <text x="15" y="24.8" font-family="Liberation Sans" font-weight="bold" font-size="7.8" textLength="43.5" lengthAdjust="spacingAndGlyphs" fill="#2a2a2a" stroke="#2a2a2a" stroke-width="0.25">Our Solutions</text>
  <rect x="15.5" y="37.5" width="7.5" height="7.5" fill="#b4bdf6" stroke="#8c9af0" stroke-width="0.8"/>
  <path d="M59 45 L63 37.5 L67 45 Z" fill="#c4cbf8" stroke="#8c9af0" stroke-width="0.9"/>
  <rect x="103.5" y="37" width="8" height="8" fill="#d0d5fa" stroke="#8c9af0" stroke-width="0.9" stroke-dasharray="1.5 1"/>
  <path d="M15 52.5 h8 M59 52.5 h8 M103 52.5 h8" stroke="#aaa" stroke-width="0.8"/>
  <path d="M15 57 h34 M15 60 h34 M15 63 h20 M59 57 h34 M59 60 h34 M59 63 h20 M103 57 h34 M103 60 h34 M103 63 h20" stroke="#e6e6e6" stroke-width="0.7"/>
 </svg>
</div>
<!-- thumb 11 -->
<div class="a" style="left:25.5px;top:552px;width:151.5px;height:10px;background:#fff;border-radius:3px 3px 0 0;overflow:hidden">
 <div class="a" style="left:103px;top:0;width:49px;height:10px;background:linear-gradient(90deg,#9a7a52,#5a4a3a 60%,#2a2420)"></div>
</div>

<!-- ===== TITLE BAR CONTENT ===== -->
<svg class="a" style="left:10.5px;top:10.2px" width="14" height="14" viewBox="0.5 0.5 14 14">
  <circle cx="7.5" cy="7.5" r="6.3" fill="none" stroke="#f6d9cf" stroke-width="1.6"/>
  <path d="M7.5 2.5 A5 5 0 0 1 7.5 12.5 Z" fill="#f6d9cf"/>
  <rect x="4" y="5" width="4.5" height="5" fill="#f6d9cf"/>
  <rect x="5.2" y="6.2" width="2" height="2.4" fill="#c43e1c"/>
</svg>
<div id="ttl" class="t" style="left:39px;top:13.5px;font-size:8.5px;letter-spacing:-0.3px;color:#f7dcd3">images-Business Development Plan PPT Template by mslides....</div>
<div class="t" style="left:267px;top:13.5px;font-size:8.5px;letter-spacing:-0.3px;color:#f7dcd3">&#8226;</div>
<div id="saved" class="t" style="left:274px;top:13.5px;font-size:8.5px;letter-spacing:-0.3px;color:#f7dcd3">Saved to this PC</div>
<svg class="a" style="left:334px;top:15px" width="7" height="5" viewBox="0 0 7 5"><path d="M0.5 0.8 L3.5 3.8 L6.5 0.8" fill="none" stroke="#f7dcd3" stroke-width="1.1"/></svg>
<div class="a" style="left:364px;top:7px;width:241px;height:20px;background:#f3dad3;border-radius:3px"></div>
<svg class="a" style="left:372px;top:11.5px" width="11" height="11" viewBox="0 0 11 11"><circle cx="6.5" cy="4.5" r="3.2" fill="none" stroke="#9a7a72" stroke-width="1.1"/><path d="M4.2 6.8 L1 10" stroke="#9a7a72" stroke-width="1.2"/></svg>
<div id="search" class="t" style="left:391.5px;top:13.3px;font-size:9px;letter-spacing:-0.3px;color:#9a6e64">Search</div>
<svg class="a" style="left:763px;top:11px" width="12" height="11" viewBox="0 0 12 11"><path d="M6 0.8 L11.4 10.3 L0.6 10.3 Z" fill="#f2c14a"/><rect x="5.4" y="3.6" width="1.2" height="3.8" fill="#5a3a10"/><rect x="5.4" y="8.2" width="1.2" height="1.2" fill="#5a3a10"/></svg>
<div class="a" style="left:780px;top:9px;width:16px;height:16px;border-radius:50%;background:#10655a"></div>
<div class="t" style="left:785px;top:12px;font-size:9px;color:#e8f0ee">t</div>
<div class="a" style="left:817px;top:17px;width:9px;height:1px;background:#f7dcd3"></div>
<div class="a" style="left:848px;top:13px;width:9px;height:9px;border:1px solid #f7dcd3;border-radius:1px"></div>
<svg class="a" style="left:880px;top:12px" width="10" height="10" viewBox="0 0 10 10"><path d="M1 1 L9 9 M9 1 L1 9" stroke="#f7dcd3" stroke-width="1.1"/></svg>

<!-- ===== TAB ROW ===== -->
<div id="tFile" class="t" style="left:16px;top:39.5px;font-size:9px;letter-spacing:-0.3px;color:#3b3b3b">File</div>
<div id="tHome" class="t" style="left:46px;top:39.5px;font-size:9px;letter-spacing:-0.3px;color:#3b3b3b">Home</div>
<div id="tiSlide" class="t" style="left:84px;top:39.5px;font-size:9px;letter-spacing:-0.3px;color:#3b3b3b">iSlide</div>
<div id="tInsert" class="t" style="left:117px;top:39.5px;font-size:9px;letter-spacing:-0.3px;color:#3b3b3b">Insert</div>
<div id="tDraw" class="t" style="left:153px;top:39.5px;font-size:9px;letter-spacing:-0.3px;color:#3b3b3b">Draw</div>
<div id="tDesign" class="t" style="left:187px;top:39.5px;font-size:9px;letter-spacing:-0.3px;color:#3b3b3b">Design</div>
<div id="tTrans" class="t" style="left:228px;top:39.5px;font-size:9px;letter-spacing:-0.3px;color:#3b3b3b">Transitions</div>
<div id="tAnim" class="t" style="left:284px;top:39.5px;font-size:9px;letter-spacing:-0.3px;color:#3b3b3b">Animations</div>
<div id="tSS" class="t" style="left:342px;top:39.5px;font-size:9px;letter-spacing:-0.3px;color:#3b3b3b">Slide Show</div>
<div id="tRec" class="t" style="left:397px;top:39.5px;font-size:9px;letter-spacing:-0.3px;color:#3b3b3b">Record</div>
<div id="tRev" class="t" style="left:439px;top:39.5px;font-size:9px;letter-spacing:-0.3px;color:#3b3b3b">Review</div>
<div id="tView" class="t" style="left:479px;top:39.5px;font-size:9px;letter-spacing:-0.3px;color:#3b3b3b">View</div>
<div id="tHelp" class="t" style="left:510px;top:39.5px;font-size:9px;letter-spacing:-0.3px;color:#3b3b3b">Help</div>
<div id="tVF" class="t" style="left:543px;top:39.5px;font-size:9px;letter-spacing:-0.3px;color:#b5514a">Video Format</div>
<div id="tPB" class="t" style="left:610px;top:39.5px;font-size:9px;letter-spacing:-0.3px;color:#b5412c">Playback</div>
<div class="a" style="left:610px;top:49px;width:34px;height:2px;background:#b5412c"></div>


<!-- ===== RIBBON CONTENT ===== -->
<div class="a" style="left:47px;top:57px;width:1px;height:59px;background:#e1e1e1"></div>
<div class="a" style="left:282px;top:57px;width:1px;height:59px;background:#e1e1e1"></div>
<div class="a" style="left:537.5px;top:57px;width:1px;height:59px;background:#e1e1e1"></div>
<div class="a" style="left:600px;top:57px;width:1px;height:59px;background:#e1e1e1"></div>
<div class="a" style="left:644px;top:57px;width:1px;height:59px;background:#e1e1e1"></div>
<svg class="a" style="left:21px;top:59px" width="17" height="21" viewBox="0 0 17 21"><path d="M1.5 1.5 L15 10.5 L1.5 19.5 Z" fill="#fff" stroke="#3f9f73" stroke-width="1.3" stroke-linejoin="round"/></svg>
<div id="rPlay" class="t" style="left:29px;top:83.1px;font-size:8.5px;letter-spacing:-0.3px;color:#3b3b3b;transform:translateX(-50%)">Play</div>
<div id="gPreview" class="t" style="left:28px;top:109.5px;font-size:8.5px;letter-spacing:-0.3px;color:#3b3b3b;transform:translateX(-50%)">Preview</div>
<svg class="a" style="left:62px;top:61px" width="23" height="20" viewBox="0 0 23 20">
<rect x="1" y="1" width="18" height="13" fill="#fff" stroke="#555" stroke-width="1"/>
<circle cx="6.5" cy="6" r="3" fill="none" stroke="#3a8fd6" stroke-width="1.3"/>
<path d="M3 12 h1 M5 12 h1 M7 12 h1" stroke="#555" stroke-width="1"/>
<path d="M17 10 V19 M12.5 14.5 H21.5" stroke="#2f9a4a" stroke-width="1.5"/></svg>
<div id="rAdd" class="t" style="left:72.5px;top:83.1px;font-size:8.5px;letter-spacing:-0.3px;color:#3b3b3b;transform:translateX(-50%)">Add</div>
<div id="rBm1" class="t" style="left:72.5px;top:93.1px;font-size:8.5px;letter-spacing:-0.3px;color:#3b3b3b;transform:translateX(-50%)">Bookmark</div>
<svg class="a" style="left:103px;top:61px" width="23" height="20" viewBox="0 0 23 20">
<rect x="1" y="1" width="18" height="13" fill="#fff" stroke="#b9b9b9" stroke-width="1"/>
<circle cx="6.5" cy="6" r="3" fill="none" stroke="#c4c4c4" stroke-width="1.3"/>
<path d="M3 12 h1 M5 12 h1 M7 12 h1" stroke="#b9b9b9" stroke-width="1"/>
<path d="M13 11 L21 19 M21 11 L13 19" stroke="#b9b9b9" stroke-width="1.2"/></svg>
<div id="rRem" class="t" style="left:114px;top:83.1px;font-size:8.5px;letter-spacing:-0.3px;color:#c4c4c4;transform:translateX(-50%)">Remove</div>
<div id="rBm2" class="t" style="left:114px;top:93.1px;font-size:8.5px;letter-spacing:-0.3px;color:#c4c4c4;transform:translateX(-50%)">Bookmark</div>
<div id="gBookmarks" class="t" style="left:93px;top:109.5px;font-size:8.5px;letter-spacing:-0.3px;color:#3b3b3b;transform:translateX(-50%)">Bookmarks</div>
<svg class="a" style="left:149px;top:58px" width="19" height="21" viewBox="0 0 19 21">
<path d="M2.5 2.5 H16.5" stroke="#666" stroke-width="0.9" stroke-dasharray="1.6 1.4"/>
<path d="M1.5 0.8 V4" stroke="#3fa46a" stroke-width="1.1"/><path d="M17.5 0.8 V4" stroke="#e0483a" stroke-width="1.1"/>
<path d="M1 4 H5" stroke="#3fa46a" stroke-width="0.8"/><path d="M14 4 H18" stroke="#e0483a" stroke-width="0.8"/>
<rect x="1.5" y="8.5" width="16" height="11" fill="#fff" stroke="#444" stroke-width="1.1"/>
<path d="M4.5 9 V19 M14.5 9 V19" stroke="#444" stroke-width="1"/>
<path d="M2.5 11 h1 M2.5 14 h1 M2.5 17 h1 M15.5 11 h1 M15.5 14 h1 M15.5 17 h1" stroke="#444" stroke-width="1"/></svg>
<div id="rTrim" class="t" style="left:158.5px;top:83.4px;font-size:8.5px;letter-spacing:-0.3px;color:#3b3b3b;transform:translateX(-50%)">Trim</div>
<div id="rVideo" class="t" style="left:158.5px;top:93.9px;font-size:8.5px;letter-spacing:-0.3px;color:#3b3b3b;transform:translateX(-50%)">Video</div>
<div id="rFD" class="t" style="left:181.5px;top:60.3px;font-size:8.5px;letter-spacing:-0.3px;color:#3b3b3b">Fade Duration</div>
<svg class="a" style="left:183px;top:76px" width="12" height="12" viewBox="0 0 12 12"><path d="M11.5 0.5 V11.5 L0.5 6 Z" fill="#8cc4ef"/><path d="M11.5 0.5 V11.5 L7 9.2 V2.8 Z" fill="#2b7fd0"/></svg>
<div id="rFI" class="t" style="left:196px;top:77.7px;font-size:8.5px;letter-spacing:-0.3px;color:#3b3b3b">Fade In:</div>
<div class="a" style="left:229px;top:74px;width:44px;height:14px;background:#fff;border:1px solid #bdbdbd;border-radius:2px"></div>
<div id="rFIv" class="t" style="left:232px;top:77.4px;font-size:8.5px;letter-spacing:-0.2px;color:#3b3b3b">00.00</div>
<svg class="a" style="left:265px;top:76px" width="5" height="10" viewBox="0 0 5 10"><path d="M0.8 3 L2.5 1.3 L4.2 3 M0.8 7 L2.5 8.7 L4.2 7" fill="none" stroke="#444" stroke-width="0.8"/></svg>
<svg class="a" style="left:183px;top:93px" width="12" height="12" viewBox="0 0 12 12"><path d="M0.5 0.5 V11.5 L11.5 6 Z" fill="#f5a3b0"/><path d="M0.5 0.5 V11.5 L5 9.2 V2.8 Z" fill="#e0485c"/></svg>
<div id="rFO" class="t" style="left:196px;top:95.1px;font-size:8.5px;letter-spacing:-0.3px;color:#3b3b3b">Fade Out:</div>
<div class="a" style="left:233px;top:91px;width:44px;height:15px;background:#fff;border:1px solid #bdbdbd;border-radius:2px"></div>
<div id="rFOv" class="t" style="left:236px;top:94.7px;font-size:8.5px;letter-spacing:-0.2px;color:#3b3b3b">00.00</div>
<svg class="a" style="left:269px;top:93.5px" width="5" height="10" viewBox="0 0 5 10"><path d="M0.8 3 L2.5 1.3 L4.2 3 M0.8 7 L2.5 8.7 L4.2 7" fill="none" stroke="#444" stroke-width="0.8"/></svg>
<div id="gEditing" class="t" style="left:210px;top:109.5px;font-size:8.5px;letter-spacing:-0.3px;color:#3b3b3b;transform:translateX(-50%)">Editing</div>
<svg class="a" style="left:292px;top:60px" width="23" height="20" viewBox="0 0 23 20">
<path d="M1 6 H5 L11 1 V15 L5 10 H1 Z" fill="#fff" stroke="#555" stroke-width="1"/>
<rect x="11" y="13" width="3" height="6" fill="#2e86d6"/><rect x="14.5" y="10" width="3" height="9" fill="#2e86d6"/><rect x="18" y="7" width="3" height="12" fill="#2e86d6"/></svg>
<div id="rVol" class="t" style="left:302px;top:82.6px;font-size:8.5px;letter-spacing:-0.3px;color:#3b3b3b;transform:translateX(-50%)">Volume</div>
<svg class="a" style="left:299.5px;top:95.5px" width="5" height="3" viewBox="0 0 5 3"><path d="M0 0 L2.5 3 L5 0 Z" fill="#555"/></svg>
<svg class="a" style="left:320px;top:58px" width="11" height="12" viewBox="0 0 11 12"><path d="M2.5 5 L9.5 7.5 L2.5 10.8 Z" fill="#fff" stroke="#4aa36c" stroke-width="1.2" stroke-linejoin="round"/><path d="M1 1.5 Q3 0 4.5 1.5 L3.5 6 L1.2 6 Z" fill="#e8902a"/></svg>
<div id="rStart" class="t" style="left:333px;top:60.3px;font-size:8.5px;letter-spacing:-0.3px;color:#3b3b3b">Start:</div>
<div class="a" style="left:355.5px;top:56px;width:83.5px;height:15.5px;background:#fff;border:1px solid #c2c2c2;border-radius:2px"></div>
<div id="rICS" class="t" style="left:358px;top:59.9px;font-size:8.5px;letter-spacing:-0.3px;color:#3b3b3b">In Click Sequence</div>
<svg class="a" style="left:432px;top:62.5px" width="5" height="3" viewBox="0 0 5 3"><path d="M0.3 0.3 L2.5 2.6 L4.7 0.3" fill="none" stroke="#444" stroke-width="0.9"/></svg>
<div class="a" style="left:320.8px;top:76.6px;width:8.6px;height:8.6px;background:#fff;border:1px solid #929292;border-radius:2px"></div>
<div class="a" style="left:320.5px;top:94.4px;width:9px;height:9px;background:#fff;border:1px solid #929292;border-radius:2px"></div>
<div class="a" style="left:443.4px;top:65.1px;width:9px;height:9px;background:#fff;border:1px solid #929292;border-radius:2px"></div>
<div class="a" style="left:443.4px;top:86.5px;width:9px;height:9px;background:#fff;border:1px solid #929292;border-radius:2px"></div>
<div id="rPFS" class="t" style="left:333px;top:78.1px;font-size:8.5px;letter-spacing:-0.3px;color:#3b3b3b">Play Full Screen</div>
<div id="rHWNP" class="t" style="left:333px;top:95.1px;font-size:8.5px;letter-spacing:-0.3px;color:#3b3b3b">Hide While Not Playing</div>
<div id="rLoop" class="t" style="left:455px;top:65.7px;font-size:8.5px;letter-spacing:-0.3px;color:#3b3b3b">Loop until Stopped</div>
<div id="rRew" class="t" style="left:455px;top:87.1px;font-size:8.5px;letter-spacing:-0.3px;color:#3b3b3b">Rewind after Playing</div>
<div id="gVO" class="t" style="left:409.5px;top:109.5px;font-size:8.5px;letter-spacing:-0.3px;color:#3b3b3b;transform:translateX(-50%)">Video Options</div>
<svg class="a" style="left:556px;top:59px" width="22" height="17" viewBox="0 0 22 17">
<rect x="1" y="1" width="18" height="12" rx="1" fill="#fff" stroke="#555" stroke-width="1"/>
<text x="10" y="10.3" font-family="Liberation Sans" font-size="8.6" text-anchor="middle" fill="#3a3a3a" stroke="#3a3a3a" stroke-width="0.25">CC</text>
<path d="M18.5 11 V17 M15.5 14 H21.5" stroke="#2f9a4a" stroke-width="1.2"/></svg>
<div id="rIns" class="t" style="left:568px;top:83.3px;font-size:8.5px;letter-spacing:-0.3px;color:#3b3b3b;transform:translateX(-50%)">Insert</div>
<div id="rCap" class="t" style="left:564.5px;top:94.1px;font-size:8.5px;letter-spacing:-0.3px;color:#3b3b3b;transform:translateX(-50%)">Captions</div>
<svg class="a" style="left:582px;top:97px" width="4" height="3" viewBox="0 0 4 3"><path d="M0 0 L2 2.5 L4 0 Z" fill="#555"/></svg>
<div id="gCO" class="t" style="left:568px;top:110.0px;font-size:8.5px;letter-spacing:-0.3px;color:#3b3b3b;transform:translateX(-50%)">Caption Options</div>
<svg class="a" style="left:611px;top:59px" width="23" height="19" viewBox="0 0 23 19">
<path d="M3 1 V5 M8 1 V5" stroke="#777" stroke-width="1"/>
<path d="M1 8 H3 L7 5 V15 L3 12 H1 Z" fill="#fff" stroke="#666" stroke-width="1"/>
<rect x="9.5" y="6.5" width="12" height="11" rx="1" fill="#fff" stroke="#b44fc6" stroke-width="1.2"/>
<rect x="12" y="6.5" width="7" height="3.5" fill="#b44fc6"/><rect x="12" y="13" width="7" height="4.5" fill="#e2b6ea"/></svg>
<div id="rSave" class="t" style="left:622px;top:82.9px;font-size:8.5px;letter-spacing:-0.3px;color:#3b3b3b;transform:translateX(-50%)">Save</div>
<div id="rMedia" class="t" style="left:622px;top:93.1px;font-size:8.5px;letter-spacing:-0.3px;color:#3b3b3b;transform:translateX(-50%)">Media as</div>
<div id="gSave" class="t" style="left:621.5px;top:110.0px;font-size:8.5px;letter-spacing:-0.3px;color:#3b3b3b;transform:translateX(-50%)">Save</div>
<svg class="a" style="left:881px;top:108px" width="9" height="6" viewBox="0 0 9 6"><path d="M0.8 0.8 L4.5 4.6 L8.2 0.8" fill="none" stroke="#555" stroke-width="1.1"/></svg>


<!-- ===== QAT ===== -->
<div id="qAS" class="t" style="left:12px;top:127.8px;font-size:8px;letter-spacing:-0.45px;color:#3b3b3b">AutoSave</div>
<div class="a" style="left:48.3px;top:125.3px;width:30.7px;height:13px;border:1.2px solid #6a6a6a;border-radius:7px;background:#fff"></div>
<div class="a" style="left:49.8px;top:127px;width:9.5px;height:9.5px;border-radius:50%;background:#5a5a5a"></div>
<div id="qOff" class="t" style="left:63.5px;top:127.8px;font-size:8px;letter-spacing:-0.2px;color:#6a6a6a">Off</div>
<svg class="a" style="left:87px;top:126px" width="11" height="11" viewBox="0 0 11 11"><rect x="0" y="0" width="11" height="11" rx="1.2" fill="#b548c6"/><rect x="2.5" y="0" width="6" height="3.5" fill="#f3dcf7"/><rect x="2" y="6.5" width="7" height="4.5" fill="#f3dcf7"/></svg>
<div id="qSave" class="t" style="left:101px;top:127.8px;font-size:8px;letter-spacing:-0.4px;color:#3b3b3b">Save</div>
<svg class="a" style="left:127px;top:125.5px" width="12" height="12" viewBox="0 0 12 12"><path d="M2.5 1.5 V5.5 H6.5" fill="none" stroke="#444" stroke-width="1.1"/><path d="M2.8 5.2 C4.5 2.8 8.5 2.5 10 5 C11.2 7.2 10 10 7.5 11" fill="none" stroke="#444" stroke-width="1.1"/></svg>
<div id="qUndo" class="t" style="left:141.5px;top:127.5px;font-size:8.5px;letter-spacing:-0.3px;color:#3b3b3b">Undo</div>
<svg class="a" style="left:168px;top:130.5px" width="5" height="3" viewBox="0 0 5 3"><path d="M0 0 L2.5 3 L5 0 Z" fill="#555"/></svg>
<svg class="a" style="left:180px;top:125.5px" width="12" height="12" viewBox="0 0 12 12"><path d="M9.5 1.5 V5.5 H5.5" fill="none" stroke="#444" stroke-width="1.1"/><path d="M9.2 5.2 C7.5 2.8 3.5 2.5 2 5 C0.8 7.2 2 10 4.5 11" fill="none" stroke="#444" stroke-width="1.1"/></svg>
<div id="qRedo" class="t" style="left:193px;top:127.5px;font-size:8.5px;letter-spacing:-0.3px;color:#3b3b3b">Redo</div>
<svg class="a" style="left:222.5px;top:125px" width="11" height="13" viewBox="0 0 11 13"><rect x="1" y="1" width="9" height="7" fill="#fff" stroke="#444" stroke-width="1"/><path d="M4.2 2.8 L7.2 4.5 L4.2 6.2 Z" fill="#2f9a4a"/><path d="M5.5 8 V11 M3 12 H8" stroke="#444" stroke-width="1"/></svg>
<div id="qFB" class="t" style="left:236.5px;top:127.5px;font-size:8.5px;letter-spacing:-0.3px;color:#3b3b3b">From Beginning</div>
<svg class="a" style="left:302px;top:125.5px" width="12" height="12" viewBox="0 0 12 12"><path d="M1 0.5 V11.5" stroke="#444" stroke-width="1"/><rect x="2" y="2" width="6" height="3" fill="#fff" stroke="#444" stroke-width="0.9"/><rect x="2" y="7" width="9" height="3" fill="#fff" stroke="#444" stroke-width="0.9"/><path d="M0 11.5 h4" stroke="#2e86d6" stroke-width="1.2"/></svg>
<div id="qAlign" class="t" style="left:315.5px;top:127.5px;font-size:8.5px;letter-spacing:-0.3px;color:#3b3b3b">Align</div>
<svg class="a" style="left:336.5px;top:130.5px" width="5" height="3" viewBox="0 0 5 3"><path d="M0 0 L2.5 3 L5 0 Z" fill="#555"/></svg>
<svg class="a" style="left:348px;top:125.5px" width="12" height="12" viewBox="0 0 12 12"><rect x="0.5" y="0.5" width="11" height="11" fill="none" stroke="#bbb" stroke-width="0.8" stroke-dasharray="1.5 1"/><rect x="3" y="3" width="4" height="4" fill="none" stroke="#bbb" stroke-width="0.8"/><rect x="5" y="5" width="4" height="4" fill="none" stroke="#bbb" stroke-width="0.8"/></svg>
<div id="qGroup" class="t" style="left:362px;top:127.5px;font-size:8.5px;letter-spacing:-0.3px;color:#b9b9b9">Group</div>
<svg class="a" style="left:386px;top:130.5px" width="5" height="3" viewBox="0 0 5 3"><path d="M0 0 L2.5 3 L5 0 Z" fill="#bbb"/></svg>
<svg class="a" style="left:403px;top:128px" width="6" height="7" viewBox="0 0 6 7"><path d="M0.5 0.8 H5.5" stroke="#555" stroke-width="1"/><path d="M0.5 3 L3 6 L5.5 3 Z" fill="#555"/></svg>

<!-- Trim Video highlight box -->
<div class="a" style="left:138.8px;top:52.7px;width:41.4px;height:59.6px;border:3.4px solid #d63a18;border-radius:6px"></div>

<!-- tab row right buttons -->
<div class="a" style="left:682px;top:35px;width:46px;height:16px;background:#fbfbfb;border:1px solid #d0d0d0;border-radius:3px"></div>
<div class="a" style="left:685px;top:39px;width:8px;height:8px;border-radius:50%;border:1px solid #555;background:#fff"></div>
<div class="a" style="left:687.5px;top:41.5px;width:3px;height:3px;border-radius:50%;background:#222"></div>
<div id="bRec" class="t" style="left:697px;top:39.5px;font-size:9px;letter-spacing:-0.3px;color:#3b3b3b">Record</div>
<div class="a" style="left:734px;top:35px;width:84px;height:16px;background:#fbfbfb;border:1px solid #d0d0d0;border-radius:3px"></div>
<svg class="a" style="left:736.5px;top:38px" width="10" height="10" viewBox="0 0 10 10"><rect x="3" y="1" width="6" height="7" fill="#555"/><rect x="0.5" y="3" width="5" height="5" fill="#333"/><circle cx="7.5" cy="1.8" r="1.5" fill="#555"/></svg>
<div id="bTeams" class="t" style="left:748px;top:39.5px;font-size:9px;letter-spacing:-0.3px;color:#3b3b3b">Present in Teams</div>
<div class="a" style="left:824px;top:35px;width:16px;height:16px;background:#fbfbfb;border:1px solid #d0d0d0;border-radius:3px"></div>
<svg class="a" style="left:827px;top:38.5px" width="10" height="9" viewBox="0 0 10 9"><path d="M1 1 H9 V6 H4 L2 8 V6 H1 Z" fill="none" stroke="#444" stroke-width="0.9"/></svg>
<div class="a" style="left:845px;top:35px;width:48px;height:16px;background:#c43e1c;border-radius:3px"></div>
<svg class="a" style="left:847px;top:38px" width="11" height="10" viewBox="0 0 11 10"><path d="M1 5 V9 H9 V6" fill="none" stroke="#f7dcd3" stroke-width="1"/><path d="M3 6 C3.5 3.5 5.5 2.5 8 2.5 M6.5 0.8 L8.5 2.5 L6.5 4.2" fill="none" stroke="#f7dcd3" stroke-width="1"/></svg>
<div id="bShare" class="t" style="left:859px;top:39.5px;font-size:9px;letter-spacing:-0.3px;color:#f7e3dc">Share</div>
<svg class="a" style="left:885px;top:42px" width="5" height="3" viewBox="0 0 5 3"><path d="M0.3 0.3 L2.5 2.6 L4.7 0.3" fill="none" stroke="#f7dcd3" stroke-width="0.9"/></svg>
<!-- Playback highlight box -->
<div class="a" style="left:600.8px;top:33.8px;width:58.7px;height:25.3px;border:3.6px solid #d63a18;border-radius:6px;"></div>

<!-- arrows -->
<svg class="a" style="left:0;top:0" width="900" height="572" viewBox="0 0 900 572"><polygon points="178.0,118.5 180.3,133.8 181.7,129.2 218.8,181.9 220.2,181.1 186.4,126.1 191.1,126.6" fill="#d9391b"/><polygon points="654.5,64.5 656.7,79.8 658.1,75.3 697.3,131.9 698.7,131.1 662.8,72.2 667.6,72.7" fill="#d9391b"/></svg>
<!-- left window edge -->
<div class="a" style="left:0;top:0;width:1.6px;height:572px;background:#5a1e14"></div><div class="a" style="left:1.6px;top:33px;width:0.9px;height:539px;background:#efd2c8"></div>

</div>
</body></html>
